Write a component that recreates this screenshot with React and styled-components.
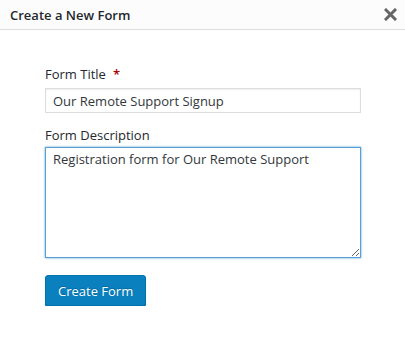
import { createGlobalStyle, styled } from 'styled-components';

const Global = createGlobalStyle`
  body {
    margin: 0;
    background: #fff;
    font-family: "Open Sans", sans-serif;
    color: #23282d;
  }
`;

const Header = styled.div`
  height: 29px;
  display: flex;
  align-items: center;
  justify-content: space-between;
  padding: 0 7px 0 10px;
  background: #fcfcfc;
  border-bottom: 1px solid #ddd;
`;

const Title = styled.h1`
  margin: 0;
  font-size: 13px;
  font-weight: 600;
  color: #23282d;
`;

const Close = styled.button`
  border: 0;
  background: none;
  padding: 0;
  width: 16px;
  height: 16px;
  display: flex;
  align-items: center;
  justify-content: center;
  color: #666;
`;

const Body = styled.form`
  padding: 35px 45px 0 45px;
  display: flex;
  flex-direction: column;
`;

const Label = styled.label`
  font-size: 13px;
  line-height: 18px;
  margin-bottom: ${p => p.$gap}px;
`;

const Star = styled.span`
  color: #a00;
  font-weight: 600;
  margin-left: 7px;
`;

const Input = styled.input`
  box-sizing: border-box;
  width: 316px;
  height: 25px;
  border: 1px solid #ddd;
  box-shadow: inset 0 1px 2px rgba(0,0,0,0.07);
  padding: 0 7px;
  font-family: "Open Sans", sans-serif;
  font-size: 13px;
  color: #32373c;
  margin-bottom: 13px;
  outline: none;
`;

const TextArea = styled.textarea`
  box-sizing: border-box;
  width: 316px;
  height: 111px;
  border: 1px solid #5b9dd9;
  box-shadow: 0 0 2px rgba(30,140,190,0.8);
  padding: 1px 7px;
  font-family: "Open Sans", sans-serif;
  font-size: 13px;
  line-height: 20px;
  color: #32373c;
  outline: none;
  margin-bottom: 17px;
  resize: vertical;
`;

const Button = styled.button`
  align-self: flex-start;
  box-sizing: border-box;
  height: 31px;
  padding: 0 12px;
  border: 1px solid #0073aa;
  border-radius: 3px;
  background: #0a80bf;
  box-shadow: 0 1px 0 #006799;
  color: #fff;
  font-family: "Open Sans", sans-serif;
  font-size: 13px;
  text-shadow: 0 -1px 1px #006799;
`;

export default function App() {
  return (
    <>
      <Global />
      <Header>
        <Title>Create a New Form</Title>
        <Close aria-label="Close">
          <svg width="13" height="13" viewBox="0 0 13 13">
            <path d="M2 2 L11 11 M11 2 L2 11" stroke="currentColor" strokeWidth="3" strokeLinecap="square" />
          </svg>
        </Close>
      </Header>
      <Body>
        <Label $gap={5}>Form Title<Star>*</Star></Label>
        <Input defaultValue="Our Remote Support Signup" />
        <Label $gap={3}>Form Description</Label>
        <TextArea defaultValue="Registration form for Our Remote Support" />
        <Button type="button">Create Form</Button>
      </Body>
    </>
  );
}
